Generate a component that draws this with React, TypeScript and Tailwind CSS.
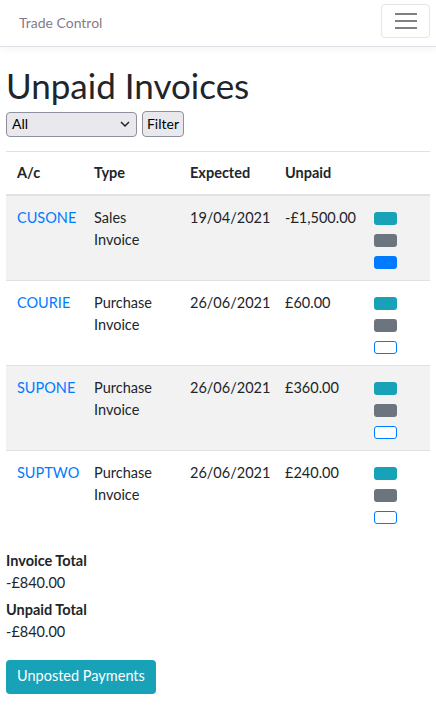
import React from 'react';

type Row = {
  account: string;
  type: string[];
  expected: string;
  unpaid: string;
  posted: boolean;
};

const rows: Row[] = [
  { account: 'CUSONE', type: ['Sales', 'Invoice'], expected: '19/04/2021', unpaid: '-£1,500.00', posted: true },
  { account: 'COURIE', type: ['Purchase', 'Invoice'], expected: '26/06/2021', unpaid: '£60.00', posted: false },
  { account: 'SUPONE', type: ['Purchase', 'Invoice'], expected: '26/06/2021', unpaid: '£360.00', posted: false },
  { account: 'SUPTWO', type: ['Purchase', 'Invoice'], expected: '26/06/2021', unpaid: '£240.00', posted: false },
];

const ActionButtons = ({ posted }: { posted: boolean }) => (
  <div className="flex flex-col gap-[9px] pt-[5px]">
    <span className="block w-[23px] h-[13px] rounded-[3px] bg-[#17a2b8]" />
    <span className="block w-[23px] h-[13px] rounded-[3px] bg-[#6c757d]" />
    {posted ? (
      <span className="block w-[23px] h-[13px] rounded-[3px] bg-[#007bff]" />
    ) : (
      <span className="block w-[23px] h-[13px] rounded-[3px] border border-[#007bff] bg-white" />
    )}
  </div>
);

export default function App() {
  return (
    <div
      className="min-h-screen bg-white text-[#212529] text-[14.5px] leading-[22.5px]"
      style={{ fontFamily: 'Lato, "Noto Sans", Arial, sans-serif' }}
    >
      {/* Navbar */}
      <nav className="h-[47px] flex items-center justify-between pl-[19px] pr-[6px] border-b border-[#dee2e6] shadow-[0_3px_6px_rgba(0,0,0,0.04)]">
        <a className="text-[#857b8d] text-[14px]">Trade Control</a>
        <button className="w-[49px] h-[34px] -mt-[4px] flex flex-col items-center justify-center gap-[5px] rounded-[4px] border border-[#e5e5e5]">
          <span className="block w-[22px] h-[2px] bg-[#808080]" />
          <span className="block w-[22px] h-[2px] bg-[#808080]" />
          <span className="block w-[22px] h-[2px] bg-[#808080]" />
        </button>
      </nav>

      <main className="px-[6px] pt-[16px]">
        <h1 className="text-[35px] leading-[45px] font-normal mb-[3px]">Unpaid Invoices</h1>

        <div className="flex items-center gap-[5px]">
          <div className="relative w-[131px] h-[25px] rounded-[4px] border border-[#8f8f9d] bg-[#e9e9ed] flex items-center pl-[5px] text-[14px] text-black">
            All
            <svg className="absolute right-[6px] top-[8px]" width="10" height="7" viewBox="0 0 10 7">
              <path d="M1 1l4 4 4-4" fill="none" stroke="#222" strokeWidth="1.5" />
            </svg>
          </div>
          <button className="w-[42px] h-[26px] rounded-[4px] border border-[#8f8f9d] bg-[#e9e9ed] text-[14px] text-black flex items-center justify-center">
            Filter
          </button>
        </div>

        <table className="mt-[14px] w-[424px] table-fixed border-collapse">
          <colgroup>
            <col className="w-[77px]" />
            <col className="w-[96px]" />
            <col className="w-[95px]" />
            <col className="w-[89px]" />
            <col className="w-[67px]" />
          </colgroup>
          <thead>
            <tr className="border-t border-[#dee2e6] border-b-2 border-b-[#dee2e6]">
              <th className="text-left font-bold px-[11px] py-[9.5px]">A/c</th>
              <th className="text-left font-bold px-[11px] py-[9.5px]">Type</th>
              <th className="text-left font-bold px-[11px] py-[9.5px]">Expected</th>
              <th className="text-left font-bold px-[11px] py-[9.5px]">Unpaid</th>
              <th className="px-[11px] py-[9.5px]" />
            </tr>
          </thead>
          <tbody>
            {rows.map((r, i) => (
              <tr
                key={r.account}
                className={`align-top border-t border-[#dee2e6] ${i % 2 === 0 ? 'bg-[#f2f2f2]' : 'bg-white'}`}
              >
                <td className="px-[11px] pt-[11px] pb-[11px]">
                  <a className="text-[#007bff]">{r.account}</a>
                </td>
                <td className="px-[11px] pt-[11px] pb-[11px]">
                  {r.type[0]}
                  <br />
                  {r.type[1]}
                </td>
                <td className="px-[11px] pt-[11px] pb-[11px]">{r.expected}</td>
                <td className="px-[11px] pt-[11px] pb-[11px] whitespace-nowrap">{r.unpaid}</td>
                <td className="px-[11px] pt-[11px] pb-[11px]">
                  <ActionButtons posted={r.posted} />
                </td>
              </tr>
            ))}
          </tbody>
        </table>

        <div className="mt-[15px]">
          <div className="font-bold">Invoice Total</div>
          <div>-£840.00</div>
          <div className="font-bold mt-[4px]">Unpaid Total</div>
          <div>-£840.00</div>
        </div>

        <button className="mt-[16px] h-[34px] px-[11px] rounded-[4px] bg-[#17a2b8] text-white">
          Unposted Payments
        </button>
      </main>
    </div>
  );
}
